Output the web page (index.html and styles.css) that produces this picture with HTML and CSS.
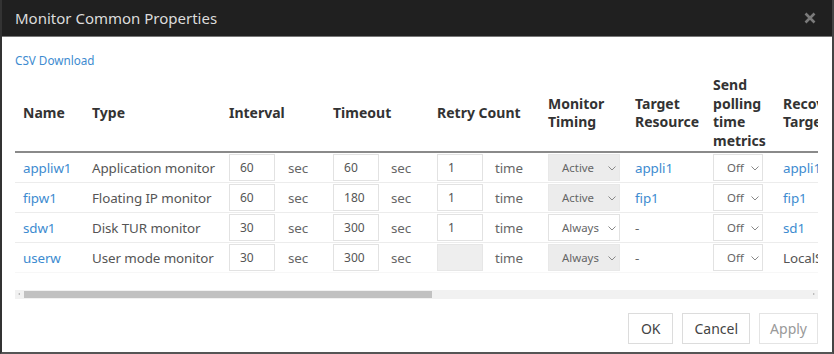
FILE: index.html
```html
<!DOCTYPE html>
<html>
<head>
<meta charset="utf-8">
<link rel="stylesheet" href="styles.css">
</head>
<body>
<div class="dialog">
  <div class="titlebar">
    <span class="title">Monitor Common Properties</span>
    <svg class="close" width="12" height="12" viewBox="0 0 12 12"><path d="M1.5 1.5L10.5 10.5M10.5 1.5L1.5 10.5" stroke="#7a7a7a" stroke-width="2.6" stroke-linecap="butt"/></svg>
  </div>
  <div class="content">
    <a class="csv">CSV Download</a>
    <div class="tablewrap">
      <table class="grid">
        <colgroup>
          <col class="c-name"><col class="c-type"><col class="c-int"><col class="c-sec"><col class="c-to"><col class="c-sec2"><col class="c-retry"><col class="c-time"><col class="c-mt"><col class="c-tr"><col class="c-sp"><col class="c-rt">
        </colgroup>
        <thead>
          <tr>
            <th>Name</th>
            <th>Type</th>
            <th colspan="2">Interval</th>
            <th colspan="2">Timeout</th>
            <th colspan="2">Retry Count</th>
            <th>Monitor Timing</th>
            <th>Target Resource</th>
            <th>Send polling time metrics</th>
            <th>Recovery Target</th>
          </tr>
        </thead>
        <tbody>
          <tr>
            <td><a class="lnk">appliw1</a></td>
            <td>Application monitor</td>
            <td><span class="inp">60</span></td><td class="unit">sec</td>
            <td><span class="inp">60</span></td><td class="unit">sec</td>
            <td><span class="inp">1</span></td><td class="unit">time</td>
            <td><span class="sel sel-mt dis">Active<svg class="chev" width="8" height="5" viewBox="0 0 8 5"><path d="M0.5 0.5L4 4L7.5 0.5" fill="none" stroke="#888" stroke-width="1"/></svg></span></td>
            <td><a class="lnk">appli1</a></td>
            <td><span class="sel sel-sp">Off<svg class="chev" width="8" height="5" viewBox="0 0 8 5"><path d="M0.5 0.5L4 4L7.5 0.5" fill="none" stroke="#888" stroke-width="1"/></svg></span></td>
            <td><a class="lnk">appli1</a></td>
          </tr>
          <tr>
            <td><a class="lnk">fipw1</a></td>
            <td>Floating IP monitor</td>
            <td><span class="inp">60</span></td><td class="unit">sec</td>
            <td><span class="inp">180</span></td><td class="unit">sec</td>
            <td><span class="inp">1</span></td><td class="unit">time</td>
            <td><span class="sel sel-mt dis">Active<svg class="chev" width="8" height="5" viewBox="0 0 8 5"><path d="M0.5 0.5L4 4L7.5 0.5" fill="none" stroke="#888" stroke-width="1"/></svg></span></td>
            <td><a class="lnk">fip1</a></td>
            <td><span class="sel sel-sp">Off<svg class="chev" width="8" height="5" viewBox="0 0 8 5"><path d="M0.5 0.5L4 4L7.5 0.5" fill="none" stroke="#888" stroke-width="1"/></svg></span></td>
            <td><a class="lnk">fip1</a></td>
          </tr>
          <tr>
            <td><a class="lnk">sdw1</a></td>
            <td>Disk TUR monitor</td>
            <td><span class="inp">30</span></td><td class="unit">sec</td>
            <td><span class="inp">300</span></td><td class="unit">sec</td>
            <td><span class="inp">1</span></td><td class="unit">time</td>
            <td><span class="sel sel-mt">Always<svg class="chev" width="8" height="5" viewBox="0 0 8 5"><path d="M0.5 0.5L4 4L7.5 0.5" fill="none" stroke="#888" stroke-width="1"/></svg></span></td>
            <td class="dash">-</td>
            <td><span class="sel sel-sp">Off<svg class="chev" width="8" height="5" viewBox="0 0 8 5"><path d="M0.5 0.5L4 4L7.5 0.5" fill="none" stroke="#888" stroke-width="1"/></svg></span></td>
            <td><a class="lnk">sd1</a></td>
          </tr>
          <tr>
            <td><a class="lnk">userw</a></td>
            <td>User mode monitor</td>
            <td><span class="inp">30</span></td><td class="unit">sec</td>
            <td><span class="inp">300</span></td><td class="unit">sec</td>
            <td><span class="inp dis"></span></td><td class="unit">time</td>
            <td><span class="sel sel-mt dis">Always<svg class="chev" width="8" height="5" viewBox="0 0 8 5"><path d="M0.5 0.5L4 4L7.5 0.5" fill="none" stroke="#888" stroke-width="1"/></svg></span></td>
            <td class="dash">-</td>
            <td><span class="sel sel-sp">Off<svg class="chev" width="8" height="5" viewBox="0 0 8 5"><path d="M0.5 0.5L4 4L7.5 0.5" fill="none" stroke="#888" stroke-width="1"/></svg></span></td>
            <td>LocalServer</td>
          </tr>
        </tbody>
      </table>
    </div>
    <div class="hscroll">
      <span class="arrow arrow-l"></span>
      <span class="track"><span class="thumb"></span></span>
      <span class="arrow arrow-r"></span>
    </div>
    <div class="buttons">
      <button class="btn btn-ok">OK</button>
      <button class="btn">Cancel</button>
      <button class="btn btn-dis">Apply</button>
    </div>
  </div>
</div>
</body>
</html>
```

FILE: styles.css
```css
html, body {
  margin: 0;
  padding: 0;
  background: #ffffff;
}
body {
  font-family: "Noto Sans", "DejaVu Sans", sans-serif;
  color: #444;
}
.dialog {
  width: 834px;
  height: 354px;
  box-sizing: border-box;
  border-left: 2px solid #333;
  border-right: 2px solid #444;
  border-bottom: 2px solid #555;
  display: flex;
  flex-direction: column;
  background: #fff;
  overflow: hidden;
}
.titlebar {
  height: 36px;
  flex: 0 0 auto;
  background: #202020;
  border-bottom: 1px solid #777;
  display: flex;
  align-items: center;
  justify-content: space-between;
  padding: 0 16px 0 13px;
}
.title {
  color: #dcdcdc;
  font-size: 15px;
}
.close {
  display: block;
}
.content {
  padding: 0 14px 0 13px;
  display: flex;
  flex-direction: column;
}
.csv {
  display: block;
  margin-top: 15px;
  font-size: 11.7px;
  line-height: 16px;
  color: #3d8bd0;
}
.tablewrap {
  margin-top: 7px;
  width: 803px;
  overflow: hidden;
}
.grid {
  border-collapse: collapse;
  table-layout: fixed;
  width: 880px;
}
.c-name { width: 69px; }
.c-type { width: 137px; }
.c-int { width: 59px; }
.c-sec { width: 45px; }
.c-to { width: 58px; }
.c-sec2 { width: 46px; }
.c-retry { width: 58px; }
.c-time { width: 53px; }
.c-mt { width: 87px; }
.c-tr { width: 78px; }
.c-sp { width: 70px; }
.c-rt { width: 120px; }
.grid th {
  text-align: left;
  font-size: 14px;
  font-weight: bold;
  color: #333;
  line-height: 18.5px;
  padding: 1px 8px 1px 8px;
  height: 74px;
  box-sizing: border-box;
  border-bottom: 2px solid #8a8a8a;
  vertical-align: middle;
  white-space: normal;
  overflow: hidden;
}
.grid td {
  font-size: 13.4px;
  letter-spacing: -0.1px;
  color: #555;
  padding: 1px 8px;
  height: 30px;
  box-sizing: border-box;
  border-bottom: 1px solid #ececec;
  vertical-align: middle;
  white-space: nowrap;
  overflow: hidden;
}
.grid tbody tr:last-child td {
  border-bottom-color: #f7f7f7;
}
.grid td.unit {
  color: #666;
}
.grid td.dash {
  color: #666;
}
.lnk {
  color: #3d8bd0;
}
.inp {
  display: flex;
  align-items: center;
  box-sizing: border-box;
  width: 46px;
  height: 27px;
  border: 1px solid #e2e2e2;
  padding-left: 10px;
  font-size: 12px;
  letter-spacing: 0;
  color: #555;
  background: #fff;
}
.inp.dis {
  background: #eeeeee;
  border-color: #e6e6e6;
}
.sel {
  display: flex;
  align-items: center;
  box-sizing: border-box;
  height: 27px;
  border: 1px solid #e2e2e2;
  font-size: 11.4px;
  letter-spacing: 0;
  color: #666;
  background: #fff;
  position: relative;
}
.sel.dis {
  background: #ececec;
  border-color: #e8e8e8;
}
.sel-mt {
  width: 72px;
  padding-left: 13px;
}
.sel-sp {
  width: 50px;
  padding-left: 13px;
}
.chev {
  position: absolute;
  right: 3px;
  top: 11px;
  display: block;
}
.hscroll {
  margin-top: 17px;
  width: 803px;
  height: 9px;
  background: #f1f1f1;
  display: flex;
  align-items: center;
}
.arrow {
  width: 9px;
  height: 9px;
  position: relative;
  flex: 0 0 auto;
}
.arrow-l::after, .arrow-r::after {
  content: "";
  position: absolute;
  top: 3px;
  width: 0;
  height: 0;
  border-top: 1.5px solid transparent;
  border-bottom: 1.5px solid transparent;
}
.arrow-l::after {
  left: 3px;
  border-right: 2px solid #aaa;
}
.arrow-r::after {
  left: 4px;
  border-left: 2px solid #aaa;
}
.track {
  flex: 1 1 auto;
  height: 7px;
  display: flex;
}
.thumb {
  width: 408px;
  height: 7px;
  background: #c1c1c1;
}
.buttons {
  margin-top: 14px;
  width: 803px;
  display: flex;
  justify-content: flex-end;
  gap: 9px;
}
.btn {
  font-family: "Noto Sans", "DejaVu Sans", sans-serif;
  font-size: 14px;
  color: #444;
  background: #fff;
  border: 1px solid #dcdcdc;
  height: 31px;
  padding: 0 11px;
  margin: 0;
  border-radius: 0;
}
.btn-ok {
  padding: 0 12px;
}
.btn-dis {
  color: #999;
  border-color: #e4e4e4;
  padding: 0 10px;
}
```
